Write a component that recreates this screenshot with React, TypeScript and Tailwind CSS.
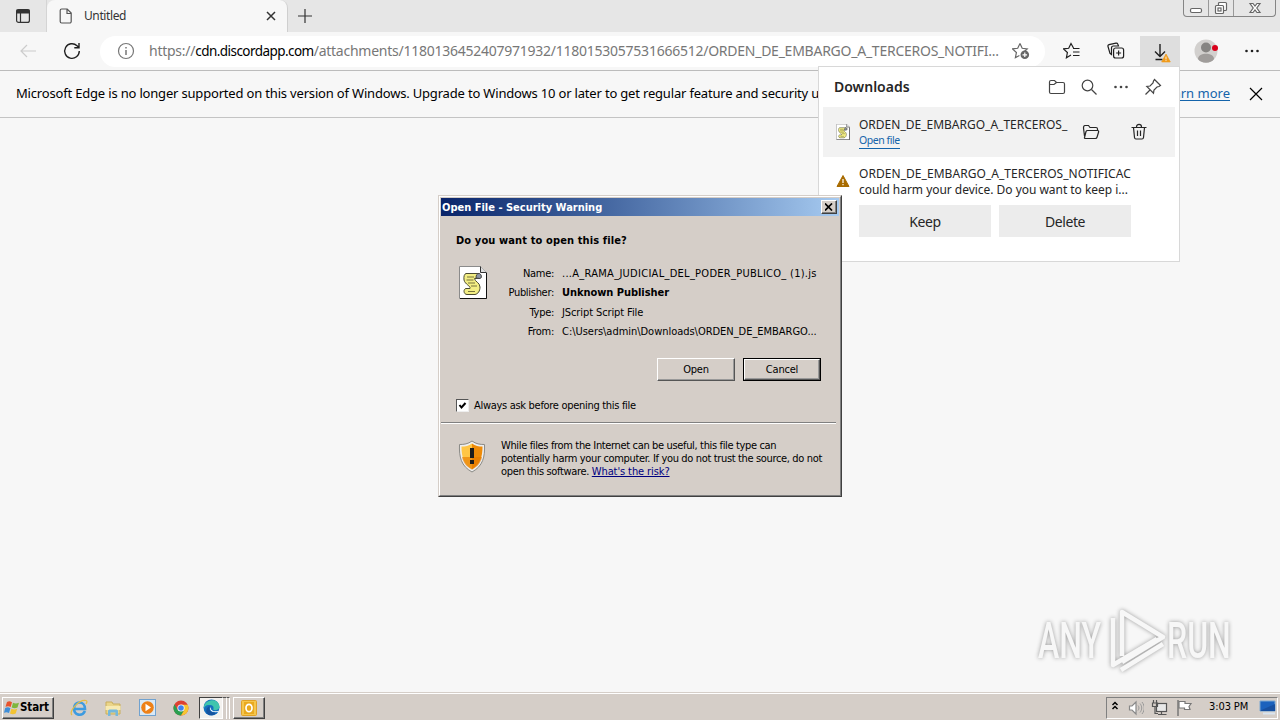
import type { ReactNode } from "react";
import clsx from "clsx";

const ATTACHMENT_PATH =
  "/attachments/1180136452407971932/1180153057531666512/ORDEN_DE_EMBARGO_A_TERCEROS_NOTIFI...";

const fileDetails = [
  { label: "Name:", value: "...A_RAMA_JUDICIAL_DEL_PODER_PUBLICO_ (1).js", className: "tracking-[0.28px]" },
  { label: "Publisher:", value: "Unknown Publisher", className: "font-bold tracking-[-0.05px]" },
  { label: "Type:", value: "JScript Script File", className: "tracking-[-0.1px]" },
  { label: "From:", value: "C:\\Users\\admin\\Downloads\\ORDEN_DE_EMBARGO...", className: "tracking-[-0.03px]" },
];

function Icon({ size = 18, className, children }: { size?: number; className?: string; children: ReactNode }) {
  return (
    <svg
      width={size}
      height={size}
      viewBox={`0 0 ${size} ${size}`}
      fill="none"
      stroke="currentColor"
      strokeWidth="1.2"
      className={clsx("block shrink-0", className)}
    >
      {children}
    </svg>
  );
}

function MoreIcon() {
  return (
    <Icon>
      <g fill="currentColor" stroke="none">
        <circle cx="3.5" cy="9" r="1.3" />
        <circle cx="9" cy="9" r="1.3" />
        <circle cx="14.5" cy="9" r="1.3" />
      </g>
    </Icon>
  );
}

function ScriptFileIcon({ className }: { className?: string }) {
  return (
    <svg viewBox="0 0 28 33" className={clsx("block shrink-0", className)}>
      <path d="M.5.5h21l6 6v26H.5z" fill="#fff" stroke="#8b8b8b" />
      <path d="M21.5.5v6h6" fill="#ddd" stroke="#333" />
      <path d="M27.5 7v25.5H1" fill="none" stroke="#111" />
      <path
        d="M7 7.500h12c3 0 4.500 4.500 1.500 5h-5c0 3 5.500 4 5.500 8.500 0 4-2 7-5 7.500H8c-3.500 0-4-5.500-1-6h4c1-2.500-5-4-6-8.500-.5-4 .5-6 2-6.500z"
        fill="#f3ee84"
        stroke="#4a4a32"
      />
      <path d="M8 11h7M7.500 14h7M9 17h7M12 20h6M9 25.500h7" stroke="#77733c" />
      <path d="M17 12c0-3 1-4.500 3-4.500s3.500 4 1 5z" fill="#8e96a8" stroke="#444" />
    </svg>
  );
}

function WarningTriangle({ size, fill }: { size: number; fill: string }) {
  return (
    <svg width={size} height={size} viewBox="0 0 14 14" className="block shrink-0">
      <path d="M7 1.500 13 12.500H1z" fill={fill} stroke={fill} strokeLinejoin="round" />
      <path d="M7 5v4M7 10v1.300" stroke="#fff" strokeWidth="1.200" />
    </svg>
  );
}

function TabStrip() {
  return (
    <div className="flex h-8 items-stretch bg-[#e6e6e6] text-[#333]">
      <div className="flex w-[47px] items-center justify-center border-r border-[#d4d4d4]">
        <Icon size={16}>
          <rect x="1.600" y="1.600" width="12.800" height="12.800" rx="2" />
          <path d="M2 2h12v3H2z" fill="currentColor" />
          <path d="M5.500 5v9" />
        </Icon>
      </div>
      <div className="flex w-[241px] items-center rounded-t-lg border-r border-[#cfcfcf] bg-[#f7f7f7] pl-[11px] pr-2">
        <Icon size={16} className="mr-[10px] text-[#555]">
          <path d="M3.700 1h5.500l4 4v8.500a1.500 1.500 0 0 1-1.500 1.500h-8a1.500 1.500 0 0 1-1.500-1.500v-11A1.500 1.500 0 0 1 3.700 1zM9 1v4.500h4.200" />
        </Icon>
        <span className="flex-1 text-[12px] leading-4 tracking-[-0.4px]">Untitled</span>
        <Icon size={16}>
          <path d="m4 4 8 8M12 4l-8 8" strokeWidth="1.500" />
        </Icon>
      </div>
      <div className="flex w-[33px] items-center justify-center">
        <Icon size={16}>
          <path d="M8 1v14M1 8h14" />
        </Icon>
      </div>
      <div className="ml-auto mr-1 flex h-[17px] rounded-b border border-t-0 border-[#858585] text-[#666]">
        <div className="flex w-[25px] items-center justify-center border-r border-[#999]">
          <Icon size={16}>
            <rect x="2.500" y="8.500" width="11" height="4" rx="1.500" fill="#fff" />
          </Icon>
        </div>
        <div className="flex w-[25px] items-center justify-center border-r border-[#999]">
          <Icon size={16}>
            <rect x="5.500" y="2.500" width="8" height="8" rx="1" fill="#fff" />
            <rect x="2.500" y="5.500" width="8" height="8" rx="1" fill="#fff" />
            <rect x="5" y="8" width="3" height="3" />
          </Icon>
        </div>
        <div className="flex w-[41px] items-center justify-center">
          <Icon size={16}>
            <path d="M3 3.500h3l2 2.500 2-2.500h3L9.800 8l3.200 4.500h-3L8 10l-2 2.500H3L6.200 8z" fill="#fff" />
          </Icon>
        </div>
      </div>
    </div>
  );
}

function Toolbar() {
  return (
    <div className="flex h-[39px] items-center border-b border-[#bcbcbc] bg-[#f7f7f7] text-[#1f1f1f]">
      <Icon className="ml-[19px] text-[#ccc]">
        <path d="M17 9H2m6-6L2 9l6 6" />
      </Icon>
      <Icon className="ml-[26px]">
        <path d="M16.300 9A7.300 7.300 0 1 1 14 3.700L16 5.500M16 1v4.700h-4.700" strokeWidth="1.400" />
      </Icon>
      <div className="ml-[19px] flex h-[31px] w-[945px] items-center rounded-full bg-white pl-[17px] pr-[15px]">
        <Icon className="text-[#777]">
          <circle cx="9" cy="9" r="7.500" />
          <path d="M9 8v5M9 5v1.500" strokeWidth="1.500" />
        </Icon>
        <span className="ml-[14px] flex-1 whitespace-nowrap text-[14px] leading-5 tracking-[-0.25px] text-[#777]">
          https://<span className="text-[13.5px] tracking-[-0.55px] text-black">cdn.discordapp.com</span>
          {ATTACHMENT_PATH}
        </span>
        <Icon className="text-[#666]">
          <path d="m8 1.500 2.200 4.800 5 .6-3.700 3.400M8 1.500 5.700 6.300l-5.200.6 3.900 3.600-1 5.200 4-2.300" />
          <circle cx="12.800" cy="12.800" r="4.300" fill="currentColor" stroke="none" />
          <path d="M12.800 10.500v4.600M10.500 12.800h4.600" stroke="#fff" />
        </Icon>
      </div>
      <Icon className="ml-[18px]">
        <path d="M10.500 6 8 1.500 5.700 6.300l-5.200.6 3.900 3.600-1 5.200L8 13M10 6.500h6.500M10 10h6.500M10 13.500h6.500" />
      </Icon>
      <Icon className="ml-[26px]">
        <rect x="6.600" y="6" width="10" height="10" rx="2" />
        <path d="M11.600 8.500v5M9.100 11h5M4.500 12.500 3 11.300 1 4.500c-.3-1 .2-1.600 1-1.900l7-1.500c1-.2 1.500.2 1.800 1L11.500 4H6.500C5 4 4.500 5 4.500 6z" />
      </Icon>
      <div className="relative ml-[15px] mt-px flex h-[31px] w-10 items-center justify-center bg-[#dedede]">
        <Icon>
          <path d="M9 1v12M4 8.500l5 5 5-5M4.500 16.500h7" strokeWidth="1.400" />
        </Icon>
        <div className="absolute bottom-[4px] right-[9px]">
          <WarningTriangle size={10} fill="#f09a1a" />
        </div>
      </div>
      <svg width="24" height="24" viewBox="0 0 24 24" className="ml-[14px] block">
        <circle cx="12" cy="12" r="11.500" fill="#d2d0ce" />
        <circle cx="12" cy="8.500" r="5" fill="#868482" />
        <path d="M4 20c0-7 16-7 16 0-3 5-13 5-16 0z" fill="#a09d9b" />
        <circle cx="21" cy="9" r="3" fill="#d9001b" />
      </svg>
      <div className="ml-[25px]">
        <MoreIcon />
      </div>
    </div>
  );
}

function InfoBar() {
  return (
    <div className="flex h-[47px] items-center border-b border-[#c4c4c4] bg-[#f7f7f7] pl-4 text-[13px] text-black">
      <span className="w-[803px] overflow-hidden whitespace-nowrap tracking-[-0.18px]">
        Microsoft Edge is no longer supported on this version of Windows. Upgrade to Windows 10 or later to get
        regular feature and security updates.
      </span>
      <span className="ml-auto mr-[18px] whitespace-nowrap text-[#1464ab] underline underline-offset-2">Learn more</span>
      <Icon size={16} className="mr-4">
        <path d="m2 2 12 12M14 2 2 14" />
      </Icon>
    </div>
  );
}

function DownloadsPanel() {
  return (
    <div className="absolute left-[818px] top-[66px] h-[196px] w-[362px] border border-[#d8d8d8] bg-white text-[#262626]">
      <div className="flex h-10 items-center pl-[15px] pr-[17px]">
        <span className="flex-1 pb-[2px] text-[14px] font-semibold">Downloads</span>
        <div className="flex items-center gap-[14px] text-[#444]">
          <Icon>
            <path d="M1.500 4c0-1 .5-1.500 1.500-1.500h3.500l2 2H15c1 0 1.500.5 1.500 1.500v8c0 1-.5 1.500-1.500 1.500H3c-1 0-1.500-.5-1.500-1.500zM1.500 6.500H6l2.500-2" />
          </Icon>
          <Icon>
            <circle cx="7.500" cy="7.500" r="5.300" />
            <path d="m11.500 11.500 5 5" />
          </Icon>
          <MoreIcon />
          <Icon>
            <path d="m10.500 1.500 6 6-1.500 1-2 .5-3 3-.5 3.200L2.800 8.500 6 8l3-3 .5-2zM6 12l-4.500 4.500" />
          </Icon>
        </div>
      </div>
      <div className="ml-1 flex h-[50px] w-[352px] items-center bg-[#f2f2f2] pl-[13px]">
        <ScriptFileIcon className="h-4 w-[14px]" />
        <div className="ml-[9px] w-[211px] shrink-0 overflow-hidden pt-px">
          <div className="whitespace-nowrap text-[12px] leading-4">ORDEN_DE_EMBARGO_A_TERCEROS_</div>
          <span className="block w-fit border-b border-[#1464ab] text-[10.5px] leading-[15px] tracking-[-0.45px] text-[#1464ab]">
            Open file
          </span>
        </div>
        <Icon className="ml-3">
          <path d="M2.500 13 1.500 5c0-1.500.3-2.500 1.500-2.500h3.500l1.500 2h6c1 0 1.500.5 1.500 1.500v1.500M2.500 14.500l1.500-6c.3-.7.500-1 1.500-1h10c1 0 1.300.5 1.100 1.500l-1.500 5c-.2.800-.6 1.500-1.600 1.500H3.500c-1 0-1.300-.500-1-1z" />
        </Icon>
        <Icon className="ml-[30px]">
          <path d="M1.500 4.500h15M6.500 4c0-3.500 5-3.500 5 0M3.500 4.500l1 10c.1 1 .5 1.500 1.500 1.500h6c1 0 1.400-.5 1.500-1.500l1-10M7.500 7.500v5.500M10.500 7.500v5.500" />
        </Icon>
      </div>
      <div className="flex pl-[17px] pt-[9px]">
        <div className="pt-[8px]">
          <WarningTriangle size={14} fill="#a86b00" />
        </div>
        <div className="ml-[9px] w-[273px] overflow-hidden">
          <div className="whitespace-nowrap text-[12px] leading-4 tracking-[0.05px]">
            ORDEN_DE_EMBARGO_A_TERCEROS_NOTIFICAC
          </div>
          <div className="whitespace-nowrap text-[12px] leading-4 tracking-[-0.03px]">
            could harm your device. Do you want to keep i...
          </div>
          <div className="mt-[7px] flex gap-2 text-[14px] tracking-[-0.4px]">
            <button className="h-8 w-[132px] bg-[#ececec]">Keep</button>
            <button className="h-8 w-[132px] bg-[#ececec]">Delete</button>
          </div>
        </div>
      </div>
    </div>
  );
}

function ClassicButton({ label, isDefault }: { label: string; isDefault?: boolean }) {
  return (
    <button className={clsx("h-[23px] w-[78px] text-[11px] tracking-[-0.2px]", isDefault && "border border-black")}>
      <span className="flex h-full items-center justify-center border border-b-[#555] border-l-white border-r-[#555] border-t-white shadow-[inset_-1px_-1px_0_#999]">
        {label}
      </span>
    </button>
  );
}

function SecurityDialog() {
  return (
    <div className="absolute left-[438px] top-[195px] h-[302px] w-[404px] border border-b-[#404040] border-l-[#d5cec8] border-r-[#404040] border-t-[#d5cec8] bg-[#d5cec8] font-['DejaVu_Sans_Condensed','DejaVu_Sans',sans-serif] text-[11px] leading-[13px] text-black">
      <div className="flex h-full flex-col border border-b-[#808080] border-l-white border-r-[#808080] border-t-white p-px">
        <div className="flex h-[18px] shrink-0 items-center bg-linear-to-r from-[#0a246a] to-[#a6caf0] pl-px pr-[2px]">
          <span className="flex-1 font-bold text-white">Open File - Security Warning</span>
          <div className="flex h-[14px] w-4 items-center justify-center border border-b-[#404040] border-l-white border-r-[#404040] border-t-white bg-[#d5cec8] shadow-[inset_-1px_-1px_0_#808080]">
            <Icon size={8}>
              <path d="m0 .5 7 7M7 .5l-7 7" strokeWidth="1.700" />
            </Icon>
          </div>
        </div>
        <div className="px-[15px] pt-[18px]">
          <div className="font-bold tracking-[0.12px]">Do you want to open this file?</div>
          <div className="mt-5 flex">
            <ScriptFileIcon className="-mt-px ml-[3px] h-[33px] w-7" />
            <div className="ml-[19px] grid grid-cols-[48px_1fr] gap-x-[8px] gap-y-[6.4px] whitespace-nowrap">
              {fileDetails.map((row) => (
                <div key={row.label} className="contents">
                  <span className="text-right tracking-[-0.3px]">{row.label}</span>
                  <span className={row.className}>{row.value}</span>
                </div>
              ))}
            </div>
          </div>
          <div className="mr-[3px] mt-5 flex justify-end gap-2">
            <ClassicButton label="Open" />
            <ClassicButton label="Cancel" isDefault />
          </div>
          <div className="mt-[17px] flex items-center">
            <div className="flex size-[13px] items-center justify-center border border-b-[#eee] border-l-[#555] border-r-[#eee] border-t-[#555] bg-white">
              <Icon size={9}>
                <path d="m1.500 4 2 2.500 4-4.500" strokeWidth="2" />
              </Icon>
            </div>
            <span className="ml-[5px] mt-px tracking-[-0.3px]">Always ask before opening this file</span>
          </div>
        </div>
        <div className="mr-[3px] mt-[10px] h-[2px] border-b border-t border-b-white border-t-[#808080]" />
        <div className="flex pl-[17px] pt-[15px]">
          <svg width="28" height="33" viewBox="0 0 28 33" className="mt-px block">
            <path d="M14 1c4 3 8 3.500 12.500 3.500C27 17 25 26 14 32 3 26 1 17 1.500 4.500 6 4.500 10 4 14 1z" fill="#eee" stroke="#8a8a86" />
            <path d="M14 3.500c3.500 2.500 6.500 3 10.500 3 0 10-2 17.500-10.500 23z" fill="#ee8b08" />
            <path d="M14 3.500c-3.500 2.500-6.500 3-10.500 3 0 10 2 17.500 10.500 23z" fill="#ffc545" />
            <path d="M14 17h10c-1.200 5.500-4 9.500-10 12.500C8 26.500 5.200 22.500 4 17z" fill="#e67b00" opacity=".65" />
            <path d="M14 8v10M14 20v4" stroke="#1d1d1d" strokeWidth="4" />
          </svg>
          <div className="ml-[15px] whitespace-nowrap tracking-[-0.35px]">
            <div>While files from the Internet can be useful, this file type can</div>
            <div>potentially harm your computer. If you do not trust the source, do not</div>
            <div>
              open this software. <span className="tracking-[-0.1px] text-[#00007f] underline">What's the risk?</span>
            </div>
          </div>
        </div>
      </div>
    </div>
  );
}

function Watermark() {
  return (
    <svg
      width="200"
      height="64"
      viewBox="0 0 200 64"
      className="absolute left-[1036px] top-[608px] overflow-visible drop-shadow-[0_0_2px_#999]"
      fill="#f7f7f7"
      fontFamily="Roboto, sans-serif"
      fontSize="50"
      fontWeight="500"
    >
      <text transform="translate(2 50) scale(.64 1)">ANY</text>
      <text transform="translate(131 50) scale(.64 1)">RUN</text>
      <path
        d="M86 48V4l41 25-41 25M77 10v47l44-26M85 62l42-26"
        fill="none"
        stroke="#f7f7f7"
        strokeWidth="4.500"
        strokeLinejoin="round"
      />
    </svg>
  );
}

function Taskbar() {
  return (
    <div className="absolute bottom-0 left-0 flex h-7 w-full items-center border-t border-[#d5cec8] bg-[#d5cec8] font-['DejaVu_Sans_Condensed','DejaVu_Sans',sans-serif] text-[11px] text-black shadow-[inset_0_1px_0_#fff]">
      <button className="ml-[2px] mt-[2px] flex h-[22px] w-[52px] items-center border border-b-[#404040] border-l-white border-r-[#404040] border-t-white pl-px font-bold shadow-[inset_-1px_-1px_0_#808080]">
        <svg width="16" height="16" viewBox="0 0 16 16" className="block shrink-0">
          <path d="M3 2c2-1 3-.8 5 .2L6.700 7C5 6 3.500 6 1.500 6.800z" fill="#e8532c" />
          <path d="M9 2.700c2 1 3.500 1 6 0L13.500 7.500c-2 1-3.800 1-5.800 0z" fill="#7eb63d" />
          <path d="M1.200 8c2-1 3.500-.8 5.200.2L5 13c-1.700-1-3-1.200-5-.3z" fill="#3f8ed8" />
          <path d="M7.400 8.800c2 1 3.700 1 5.800 0L11.700 13.500c-2 1-3.700 1-5.700 0z" fill="#f3c331" />
        </svg>
        <span className="mt-px text-[11.5px] tracking-[-0.1px]">Start</span>
      </button>
      <svg width="18" height="18" viewBox="0 0 18 18" fill="none" className="ml-4 mt-[2px] block">
        <path d="M15 12c-3 6-11 4.500-11-2.500 0-8 11-8 11 .5H4" stroke="#3d9be0" strokeWidth="2.600" />
        <path d="M2 16C-2 13 9 0 16 1.500c1.500.5 1 2 0 3.500" stroke="#e4bd45" strokeWidth="1.200" />
      </svg>
      <svg width="18" height="18" viewBox="0 0 18 18" className="ml-4 mt-[2px] block">
        <path d="M2 3h6l1 2h7v10H2z" fill="#ead589" stroke="#c9ae5c" />
        <path d="M1.500 7h15v4h-15z" fill="#f7eab2" />
        <path d="M4 17v-5c0-1 1-1.500 2-1.500h6c1 0 2 .5 2 1.500v5h-2.500v-3.500h-5V17z" fill="#75b8dc" />
      </svg>
      <svg width="17" height="17" viewBox="0 0 17 17" className="ml-[17px] mt-[2px] block">
        <rect x=".5" y=".5" width="16" height="16" fill="#d9e9f6" stroke="#71a2cf" />
        <circle cx="8.500" cy="8.500" r="6.300" fill="#ee8118" />
        <path d="m6.500 4.800 5.500 3.700-5.500 3.700z" fill="#fff" />
      </svg>
      <svg width="16" height="16" viewBox="0 0 16 16" className="ml-[17px] mt-[2px] block">
        <circle cx="8" cy="8" r="7.500" fill="#dd4132" />
        <path d="M1.500 4.200A7.500 7.500 0 0 0 8 15.500L11.300 10H4.700z" fill="#299f50" />
        <path d="M8 15.500A7.500 7.500 0 0 0 14.700 4.700H8L11.300 10z" fill="#f7c631" />
        <circle cx="8" cy="8" r="3.600" fill="#fff" />
        <circle cx="8" cy="8" r="2.800" fill="#3e82ed" />
      </svg>
      <div className="ml-[10px] mt-[2px] flex h-[22px] items-stretch">
        <div className="flex w-[24px] items-center justify-center border border-b-white border-l-[#404040] border-r-white border-t-[#404040] bg-[#f3f1ee]">
          <svg width="17" height="17" viewBox="0 0 17 17" className="block">
            <circle cx="8.500" cy="8.500" r="8" fill="#1671bf" />
            <path d="M1 7C3 0 15-1.500 16.500 7c.5 4-4 5-6.500 3.500 1-1 1-4.500-3-4.500-3 0-5 .5-6 3z" fill="#3fc5ad" />
            <path d="M7 7c-2 3 0 7 6.500 6.500-3 4-9 3.500-10 0C2.500 10 5 7.500 7 7z" fill="#1554a0" />
            <path d="M8 8c-1 3 2 5 7 4 1.500-.5 1.300 0 1 .5-4 1.500-9 .5-9-3z" fill="#fff" />
          </svg>
        </div>
        <div className="w-1 border-r border-t border-r-white border-t-[#555]" />
        <div className="w-[3px] border-r border-t border-r-white border-t-[#555]" />
      </div>
      <div className="ml-[3px] mt-[2px] flex h-[22px] w-8 items-center justify-center border border-b-[#404040] border-l-white border-r-[#404040] border-t-white shadow-[inset_-1px_-1px_0_#808080]">
        <svg width="16" height="16" viewBox="0 0 16 16" className="block">
          <rect x=".5" y=".5" width="15" height="15" rx="1" fill="#f5c64c" stroke="#e0a126" />
          <rect x="3" y="2" width="10" height="12" fill="#e9a91f" />
          <ellipse cx="8" cy="8" rx="3" ry="3.700" fill="none" stroke="#fff" strokeWidth="1.700" />
        </svg>
      </div>
      <div className="ml-auto mr-[2px] mt-[2px] flex h-[22px] w-[172px] items-center border border-b-white border-l-[#808080] border-r-white border-t-[#808080] pl-[3px] text-[#555]">
        <Icon size={10} className="-mt-[3px]">
          <path d="m2.500 4 2.500-2.500 2.500 2.500M2.500 8 5 5.500 7.500 8" stroke="#000" strokeWidth="1.500" />
        </Icon>
        <Icon size={16} className="ml-2">
          <path d="M1.500 6h2.500l4-4v12l-4-4H1.500z" fill="#fff" stroke="#888" />
          <path d="M10 5.500c1.300 1.500 1.300 3.500 0 5M12 3.500c2.300 3 2.300 6 0 9M14 2c3 4 3 8 0 12" stroke="#999" strokeWidth="1" />
        </Icon>
        <Icon size={18} className="ml-[7px]">
          <rect x="5.500" y="4.500" width="10" height="8" fill="#e8e8e8" />
          <path d="M7 15.500h8.500M10.500 12.500v3M2.500 1v3M5.500 1v3M1.500 4h5v3.500h-5zM4 8v6.500h3" />
        </Icon>
        <Icon size={18} className="ml-[6px]">
          <path d="M3 1v16" stroke="#777" strokeWidth="1.500" />
          <path d="M4 2.500h6v2h6l-2 3 1 3H9.500v-1.500H4z" fill="#fff" stroke="#777" />
        </Icon>
        <span className="ml-4 whitespace-nowrap tracking-[-0.1px] text-black">3:03 PM</span>
        <svg width="17" height="15" viewBox="0 0 17 15" className="ml-auto mr-px block">
          <path d="M1 1h15v10H1z" fill="#1b62bd" stroke="#7ba8d2" />
          <path d="M1.500 10.500 16 4v7H1.500z" fill="#1750a0" />
          <path d="M4 13.500h12" stroke="#d8e4ef" strokeWidth="2" />
        </svg>
      </div>
    </div>
  );
}

export default function App() {
  return (
    <div className="relative h-[720px] w-[1280px] overflow-hidden bg-[#f7f7f7] font-['Noto_Sans',sans-serif]">
      <TabStrip />
      <Toolbar />
      <InfoBar />
      <DownloadsPanel />
      <SecurityDialog />
      <Watermark />
      <Taskbar />
    </div>
  );
}
